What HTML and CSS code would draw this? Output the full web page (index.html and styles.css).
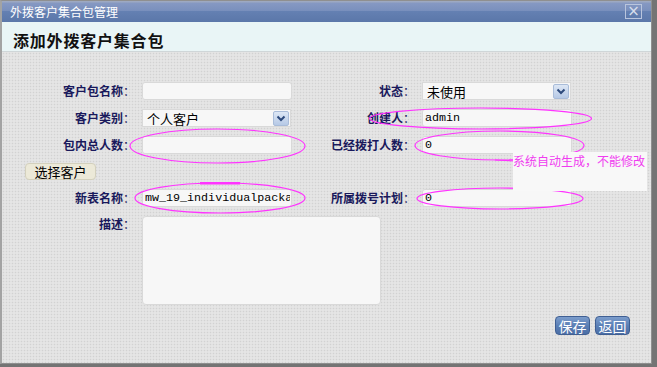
FILE: index.html
```html
<!doctype html>
<html>
<head>
    <meta charset="UTF-8">
    <title>外拨客户集合包管理</title>
    <link rel="stylesheet" href="styles.css">
</head>
<body>
<div class="dialog">
    <div class="title-bar">
        <span class="title-text">外拨客户集合包管理</span>
        <span class="close-btn">×</span>
    </div>
    <div class="head">添加外拨客户集合包</div>
    <div class="body">
        <div class="form">
            <label class="lbl">客户包名称<i>：</i></label>
            <div class="field"><input class="txt" type="text" value=""></div>
            <label class="lbl">状态<i>：</i></label>
            <div class="field">
                <div class="sel"><span>未使用</span><b class="arrow"><svg width="10" height="7" viewBox="0 0 10 7"><path d="M1.5 1.5 L5 5 L8.5 1.5" fill="none" stroke="#2d4a7c" stroke-width="2"/></svg></b></div>
            </div>

            <label class="lbl">客户类别<i>：</i></label>
            <div class="field">
                <div class="sel"><span>个人客户</span><b class="arrow"><svg width="10" height="7" viewBox="0 0 10 7"><path d="M1.5 1.5 L5 5 L8.5 1.5" fill="none" stroke="#2d4a7c" stroke-width="2"/></svg></b></div>
            </div>
            <label class="lbl">创建人<i>：</i></label>
            <div class="field"><input class="txt mono" type="text" value="admin"></div>

            <label class="lbl">包内总人数<i>：</i></label>
            <div class="field"><input class="txt" type="text" value=""></div>
            <label class="lbl">已经拨打人数<i>：</i></label>
            <div class="field"><input class="txt mono" type="text" value="0"></div>

            <div class="pick-row"><button class="pick-btn">选择客户</button></div>

            <label class="lbl">新表名称<i>：</i></label>
            <div class="field"><input class="txt mono" type="text" value="mw_19_individualpacka"></div>
            <label class="lbl">所属拨号计划<i>：</i></label>
            <div class="field"><input class="txt mono" type="text" value="0"></div>

            <label class="lbl top">描述<i>：</i></label>
            <div class="field wide"><textarea class="area"></textarea></div>
        </div>
        <div class="actions">
            <button class="blue-btn">保存</button>
            <button class="blue-btn">返回</button>
        </div>
    </div>

    <!-- 批注：红圈 + 白底提示 -->
    <svg class="marks" width="652" height="364" viewBox="0 0 652 364">
        <g fill="none" stroke="#ff33ff" stroke-width="1.2">
            <ellipse cx="217.5" cy="146" rx="87.5" ry="17"/>
            <ellipse cx="480.5" cy="118.5" rx="111" ry="10.5"/>
            <ellipse cx="499.5" cy="145.5" rx="84.5" ry="14.5"/>
            <line x1="495" y1="160" x2="516" y2="161"/>
            <ellipse cx="220" cy="198" rx="85" ry="15"/>
            <path d="M200 183.2 L240 183.2" stroke-width="2.4"/>
            <ellipse cx="500" cy="198.5" rx="83" ry="10.5"/>
        </g>
    </svg>
    <div class="note">系统自动生成，不能修改</div>
</div>
</body>
</html>
```

FILE: styles.css
```css
* {
    margin: 0;
    padding: 0;
    box-sizing: border-box;
}
body {
    background: #747474;
    font-family: "Noto Sans CJK SC", "Liberation Sans", sans-serif;
    font-size: 12px;
}
/*弹出框*/
.dialog {
    position: relative;
    width: 652px;
    height: 364px;
    border: 1px solid #8f8f8f;
    border-left: 2px solid #a3a3a3;
    background: #e4e4e4;
    display: flex;
    flex-direction: column;
}
.title-bar {
    height: 21px;
    display: flex;
    align-items: center;
    justify-content: space-between;
    padding: 0 9px 0 8px;
    background: linear-gradient(#a3adc2 0, #8598c2 12%, #7a90bd 45%, #6480b2 50%, #5b77a9 100%);
}
.title-text {
    color: #fff;
    font-size: 12px;
    line-height: 16px;
}
.close-btn {
    width: 17px;
    height: 15px;
    border: 1px solid #b9c5dd;
    color: #d6deec;
    font-family: "DejaVu Sans", sans-serif;
    font-size: 15px;
    line-height: 12px;
    text-align: center;
}
.head {
    height: 30px;
    padding: 7px 0 0 11px;
    background: #e9f5f6;
    border-bottom: 1px solid #cfd6d8;
    font-size: 16px;
    font-weight: bold;
    line-height: 22px;
    letter-spacing: 0.8px;
    color: #111;
}
.body {
    flex: 1;
    padding-top: 30px;
    background-color: #e5e5e5;
    background-image: radial-gradient(#d2d2d2 0.7px, transparent 1.1px);
    background-size: 3px 3px;
}
/*表单*/
.form {
    display: grid;
    grid-template-columns: 140px 150px 130px 150px;
    grid-template-rows: 18px 18px 18px 17px 18px 89px;
    row-gap: 9px;
}
.lbl {
    padding-right: 7px;
    text-align: right;
    font-weight: bold;
    color: #19195c;
    line-height: 18px;
    white-space: nowrap;
}
.lbl i {
    font-style: normal;
    font-weight: normal;
}
.lbl.top {
    line-height: 16px;
    align-self: start;
}
.field.wide {
    grid-column: 2 / 4;
}
.txt {
    display: block;
    width: 150px;
    height: 18px;
    border: 1px solid #d9d9d9;
    border-radius: 3px;
    background: #f7f7f7;
    padding: 0 3px;
    font-family: "Noto Sans CJK SC", sans-serif;
    font-size: 13px;
    color: #000;
    outline: none;
}
.txt.mono {
    font-family: "Liberation Mono", "DejaVu Sans Mono", monospace;
    font-size: 11.7px;
    padding: 0 1px 0 2px;
}
.sel {
    width: 149px;
    height: 18px;
    display: flex;
    align-items: center;
    justify-content: space-between;
    border: 1px solid #d9d9d9;
    background: #f7f7f7;
    padding: 0 1px 0 4px;
    font-size: 13px;
    color: #000;
}
.arrow {
    width: 16px;
    height: 15px;
    display: flex;
    align-items: center;
    justify-content: center;
    border: 1px solid #a9bcd9;
    border-radius: 2px;
    background: linear-gradient(#dde7f5, #b6c9e6);
}
.area {
    display: block;
    width: 239px;
    height: 89px;
    border: 1px solid #d9d9d9;
    border-radius: 4px;
    background: #f7f7f7;
    resize: none;
    outline: none;
}
.pick-row {
    grid-column: 1 / -1;
}
.pick-btn {
    margin-left: 23px;
    width: 71px;
    height: 17px;
    border: 1px solid #d3d0bd;
    border-radius: 4px;
    background: #ece9d8;
    font-family: "Noto Sans CJK SC", sans-serif;
    font-size: 13px;
    line-height: 15px;
    color: #000;
}
/*按钮*/
.actions {
    display: flex;
    justify-content: flex-end;
    gap: 5px;
    padding: 11px 21px 0 0;
}
.blue-btn {
    width: 35px;
    height: 19px;
    border: 1px solid #3f5f93;
    border-radius: 4px;
    background: linear-gradient(#7b9ccb, #5c80b6 50%, #4b6ea6);
    color: #fff;
    font-family: "Noto Sans CJK SC", sans-serif;
    font-size: 14px;
    line-height: 16px;
}
/*批注*/
.marks {
    position: absolute;
    left: -2px;
    top: -1px;
    pointer-events: none;
}
.note {
    position: absolute;
    left: 511px;
    top: 151px;
    width: 134px;
    height: 39px;
    background: #f8f8f8;
    color: #f03cf0;
    font-size: 12px;
    line-height: 17px;
    white-space: nowrap;
}
```
